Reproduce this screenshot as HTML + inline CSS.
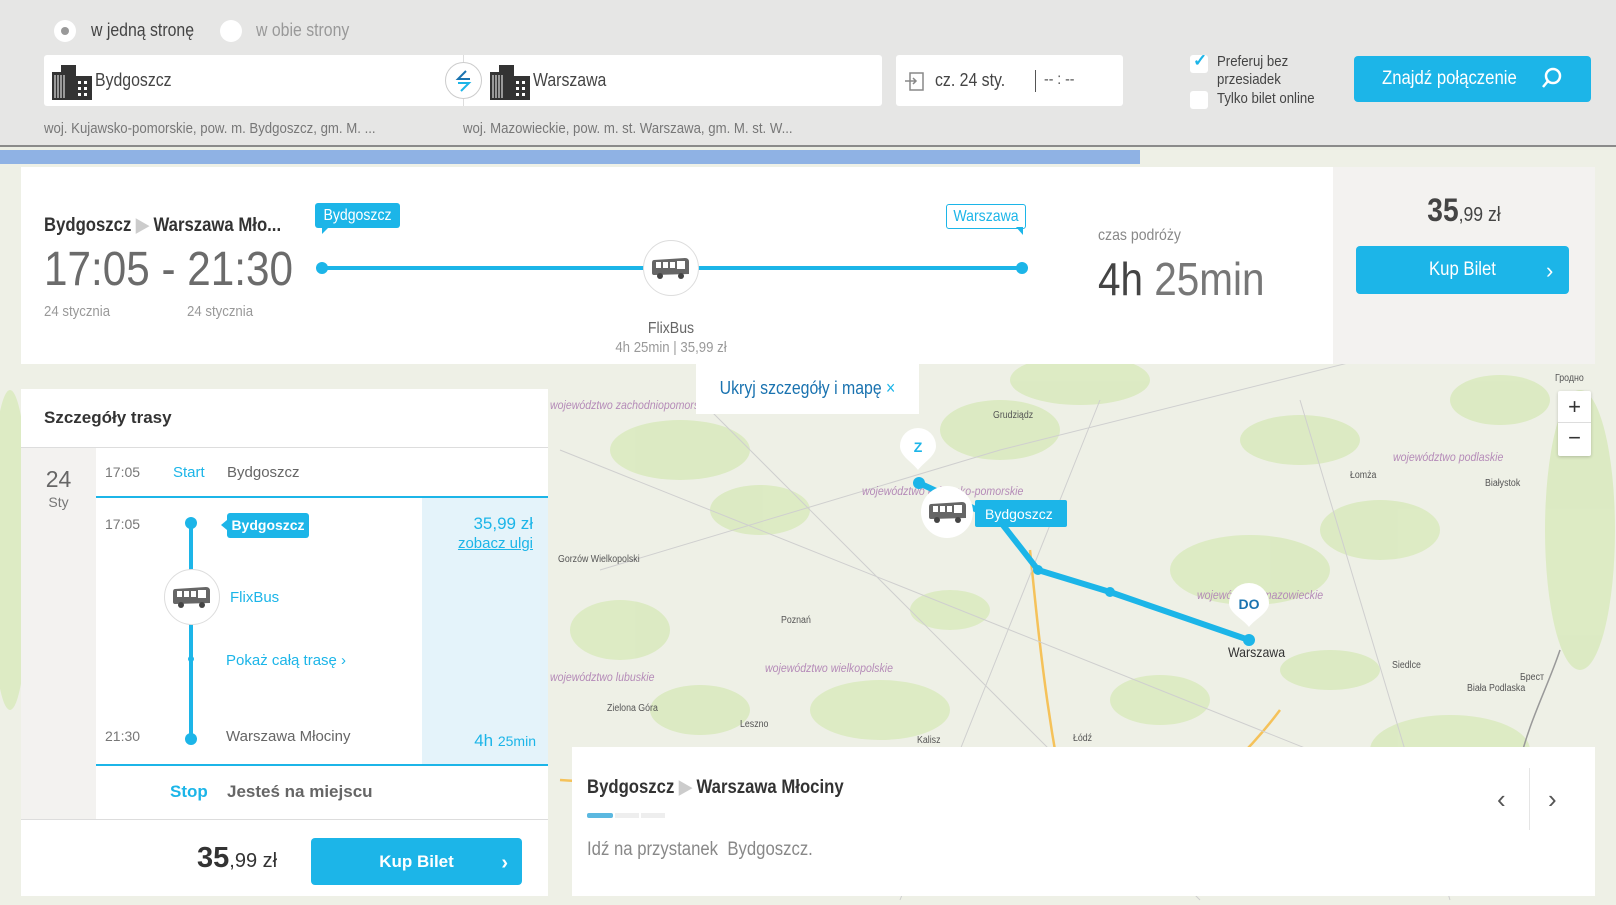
<!DOCTYPE html>
<html><head><meta charset="utf-8">
<style>
*{margin:0;padding:0;box-sizing:border-box}
body{width:1616px;height:905px;overflow:hidden;position:relative;font-family:"Liberation Sans",sans-serif;background:#eceee4;color:#444}
.a{position:absolute}
.n{transform:scaleX(.88);transform-origin:0 0;white-space:nowrap}
.nc{transform:scaleX(.88);transform-origin:50% 0;white-space:nowrap}
.map-lbl{position:absolute;font-size:12px;font-style:italic;color:#b58bb8;transform:scaleX(.88);transform-origin:0 0;white-space:nowrap}
.city{position:absolute;font-size:10px;color:#555;transform:scaleX(.88);transform-origin:0 0;white-space:nowrap}
.btn{position:absolute;background:#1cb5e8;color:#fff;border-radius:4px;font-size:18px}
</style></head><body>

<!-- map background -->
<svg class="a" style="left:0;top:150px" width="1616" height="755">
<rect width="1616" height="755" fill="#eef0e6"/>
<rect x="0" y="0" width="1140" height="14" fill="#8fb2e4"/>
<g fill="#d9eabd" opacity="0.85">
<ellipse cx="680" cy="300" rx="70" ry="30"/><ellipse cx="760" cy="360" rx="50" ry="25"/><ellipse cx="1000" cy="280" rx="60" ry="30"/>
<ellipse cx="1080" cy="230" rx="70" ry="25"/><ellipse cx="1250" cy="420" rx="80" ry="35"/><ellipse cx="1380" cy="380" rx="60" ry="30"/>
<ellipse cx="1580" cy="380" rx="35" ry="140"/><ellipse cx="880" cy="560" rx="70" ry="30"/><ellipse cx="1450" cy="600" rx="80" ry="35"/>
<ellipse cx="620" cy="480" rx="50" ry="30"/><ellipse cx="1160" cy="550" rx="50" ry="25"/><ellipse cx="10" cy="400" rx="20" ry="160"/>
<ellipse cx="1300" cy="290" rx="60" ry="25"/><ellipse cx="950" cy="460" rx="40" ry="20"/><ellipse cx="1500" cy="250" rx="50" ry="25"/>
<ellipse cx="700" cy="560" rx="50" ry="25"/><ellipse cx="1050" cy="640" rx="50" ry="20"/><ellipse cx="1330" cy="520" rx="50" ry="20"/>
</g>
<g fill="none" stroke="#f5c25a" stroke-width="2.5">
<path d="M560 630 C700 640 780 620 840 680 C900 730 1000 750 1100 700 C1160 670 1220 640 1280 560"/>
<path d="M1030 400 C1040 500 1050 600 1080 720"/>
<path d="M1300 700 C1320 690 1340 700 1360 710"/>
</g>
<g fill="none" stroke="#cfcfcf" stroke-width="1">
<path d="M560 300 L1560 700 M700 250 L1200 750 M1100 250 L900 750 M1300 250 L1450 750 M600 420 L1000 300 L1400 200"/>
</g>
<path d="M1560 500 C1540 560 1500 620 1520 700" stroke="#999" stroke-width="1.5" fill="none"/>
</svg>

<div class="map-lbl" style="left:550px;top:398px">województwo zachodniopomorskie</div>
<div class="map-lbl" style="left:862px;top:484px">województwo kujawsko-pomorskie</div>
<div class="map-lbl" style="left:1393px;top:450px">województwo podlaskie</div>
<div class="map-lbl" style="left:1197px;top:588px">województwo mazowieckie</div>
<div class="map-lbl" style="left:765px;top:661px">województwo wielkopolskie</div>
<div class="map-lbl" style="left:550px;top:670px">województwo lubuskie</div>
<div class="city" style="left:993px;top:410px">Grudziądz</div>
<div class="city" style="left:1350px;top:470px">Łomża</div>
<div class="city" style="left:1485px;top:478px">Białystok</div>
<div class="city" style="left:558px;top:554px">Gorzów Wielkopolski</div>
<div class="city" style="left:781px;top:615px">Poznań</div>
<div class="city" style="left:1392px;top:660px">Siedlce</div>
<div class="city" style="left:1467px;top:683px">Biała Podlaska</div>
<div class="city" style="left:1520px;top:672px">Брест</div>
<div class="city" style="left:607px;top:703px">Zielona Góra</div>
<div class="city" style="left:740px;top:719px">Leszno</div>
<div class="city" style="left:917px;top:735px">Kalisz</div>
<div class="city" style="left:1073px;top:733px">Łódź</div>
<div class="city" style="left:1555px;top:373px">Гродно</div>
<div class="a n" style="left:1228px;top:644px;font-size:14px;color:#333">Warszawa</div>

<!-- route -->
<svg class="a" style="left:0;top:0" width="1616" height="905">
<polyline points="919,483 999,520 1038,570 1110,592 1249,640" fill="none" stroke="#1cb5e8" stroke-width="6" stroke-linejoin="round"/>
<circle cx="919" cy="483" r="6" fill="#1cb5e8"/><circle cx="1038" cy="570" r="5" fill="#1cb5e8"/><circle cx="1110" cy="592" r="5" fill="#1cb5e8"/><circle cx="1249" cy="640" r="6" fill="#1cb5e8"/>
<path d="M918 470 C912 462 900 456 900 446 a18 18 0 0 1 36 0 C936 456 924 462 918 470Z" fill="#fff"/>
<text x="918" y="452" font-size="14" font-weight="bold" fill="#1cb5e8" text-anchor="middle" font-family="Liberation Sans">Z</text>
<path d="M1249 627 C1243 619 1229 613 1229 603 a20 20 0 0 1 40 0 C1269 613 1255 619 1249 627Z" fill="#fff"/>
<text x="1249" y="609" font-size="14" font-weight="bold" fill="#1a73b0" text-anchor="middle" font-family="Liberation Sans">DO</text>
<rect x="975" y="500" width="92" height="27" rx="2" fill="#1cb5e8"/>
<text x="985" y="519" font-size="14" fill="#fff" font-family="Liberation Sans">Bydgoszcz</text>
<circle cx="947" cy="512" r="26" fill="#fff"/>
</svg>
<svg class="a" style="left:928px;top:500px" width="40" height="24" viewBox="0 0 40 24"><path d="M3 4 L34 2 Q38 2 38 6 L38 18 L3 19 Q1 19 1 17 L1 7 Q1 4 3 4Z" fill="#666"/><g fill="#fff"><rect x="5" y="6" width="5" height="6"/><rect x="12" y="6" width="5" height="6"/><rect x="19" y="6" width="5" height="6"/><rect x="26" y="5" width="8" height="8"/></g><circle cx="9" cy="20" r="3" fill="#444"/><circle cx="30" cy="20" r="3" fill="#444"/></svg>

<!-- zoom controls -->
<div class="a" style="left:1558px;top:391px;width:33px;height:65px;background:#fff;border-radius:2px;box-shadow:0 1px 3px rgba(0,0,0,.2)">
<div style="height:32px;text-align:center;font-size:22px;line-height:32px;color:#333;border-bottom:1px solid #ddd">+</div>
<div style="height:32px;text-align:center;font-size:22px;line-height:30px;color:#333">−</div></div>

<!-- header -->
<div class="a" style="left:0;top:0;width:1616px;height:147px;background:#e6e6e5;border-bottom:2px solid #8a8a8a"></div>
<div class="a" style="left:54px;top:20px;width:22px;height:22px;border-radius:50%;background:#fff"></div>
<div class="a" style="left:61px;top:27px;width:8px;height:8px;border-radius:50%;background:#999"></div>
<div class="a n" style="left:91px;top:20px;font-size:18px;color:#444">w jedną stronę</div>
<div class="a" style="left:220px;top:20px;width:22px;height:22px;border-radius:50%;background:#fff"></div>
<div class="a n" style="left:256px;top:20px;font-size:18px;color:#999">w obie strony</div>

<div class="a" style="left:44px;top:55px;width:838px;height:51px;background:#fff;border-radius:3px"></div>
<div class="a" style="left:463px;top:55px;width:1px;height:51px;background:#ddd"></div>
<svg class="a" style="left:52px;top:64px" width="40" height="36" viewBox="0 0 40 36"><rect x="0" y="8" width="14" height="28" fill="#333"/><rect x="9" y="1" width="15" height="35" fill="#333"/><rect x="20" y="12" width="20" height="24" fill="#333"/><g stroke="#fff" stroke-width="1"><path d="M3 11v23M6 11v23M9 11v23M12 11v23"/></g><g fill="#fff"><rect x="26" y="17" width="3" height="3"/><rect x="32" y="17" width="3" height="3"/><rect x="26" y="23" width="3" height="3"/><rect x="32" y="23" width="3" height="3"/><rect x="26" y="29" width="3" height="3"/><rect x="32" y="29" width="3" height="3"/></g></svg>
<div class="a n" style="left:95px;top:70px;font-size:18px;color:#444">Bydgoszcz</div>
<div class="a" style="left:445px;top:62px;width:37px;height:37px;border-radius:50%;background:#fff;border:1px solid #ccc"></div>
<svg class="a" style="left:453px;top:68px" width="20" height="26"><path d="M13 3 L5 11 L17 11" fill="none" stroke="#1a73b0" stroke-width="2"/><path d="M5 15 L16 15 L8 23" fill="none" stroke="#1cb5e8" stroke-width="2"/></svg>
<svg class="a" style="left:490px;top:64px" width="40" height="36" viewBox="0 0 40 36"><rect x="0" y="8" width="14" height="28" fill="#333"/><rect x="9" y="1" width="15" height="35" fill="#333"/><rect x="20" y="12" width="20" height="24" fill="#333"/><g stroke="#fff" stroke-width="1"><path d="M3 11v23M6 11v23M9 11v23M12 11v23"/></g><g fill="#fff"><rect x="26" y="17" width="3" height="3"/><rect x="32" y="17" width="3" height="3"/><rect x="26" y="23" width="3" height="3"/><rect x="32" y="23" width="3" height="3"/><rect x="26" y="29" width="3" height="3"/><rect x="32" y="29" width="3" height="3"/></g></svg>
<div class="a n" style="left:533px;top:70px;font-size:18px;color:#444">Warszawa</div>

<div class="a" style="left:896px;top:55px;width:227px;height:51px;background:#fff;border-radius:3px"></div>
<svg class="a" style="left:904px;top:70px" width="22" height="22"><rect x="6" y="3" width="13" height="17" fill="none" stroke="#888" stroke-width="1.5"/><path d="M1 11 H12 M9 8 L12 11 L9 14" fill="none" stroke="#888" stroke-width="1.5"/></svg>
<div class="a n" style="left:935px;top:70px;font-size:18px;color:#444">cz. 24 sty.</div>
<div class="a" style="left:1035px;top:70px;width:1px;height:22px;background:#555"></div>
<div class="a n" style="left:1044px;top:71px;font-size:16px;color:#555">-- : --</div>

<div class="a" style="left:1190px;top:55px;width:18px;height:18px;background:#fff;border-radius:3px"></div>
<div class="a" style="left:1193px;top:51px;font-size:17px;color:#1cb5e8;font-weight:bold">✓</div>
<div class="a n" style="left:1217px;top:53px;font-size:15px;color:#444;line-height:18px">Preferuj bez<br>przesiadek</div>
<div class="a" style="left:1190px;top:91px;width:18px;height:18px;background:#fff;border-radius:3px"></div>
<div class="a n" style="left:1217px;top:90px;font-size:15px;color:#444">Tylko bilet online</div>
<div class="btn" style="left:1354px;top:56px;width:237px;height:46px"></div>
<div class="a n" style="left:1382px;top:68px;font-size:19px;color:#fff">Znajdź połączenie</div>
<svg class="a" style="left:1540px;top:66px" width="24" height="26"><circle cx="13" cy="10" r="7" fill="none" stroke="#fff" stroke-width="2.5"/><path d="M8 15 L3 21" stroke="#fff" stroke-width="2.5"/></svg>
<div class="a n" style="left:44px;top:120px;font-size:15px;color:#777">woj. Kujawsko-pomorskie, pow. m. Bydgoszcz, gm. M. ...</div>
<div class="a n" style="left:463px;top:120px;font-size:15px;color:#777">woj. Mazowieckie, pow. m. st. Warszawa, gm. M. st. W...</div>

<!-- top card -->
<div class="a" style="left:21px;top:167px;width:1312px;height:197px;background:#fff"></div>
<div class="a" style="left:1333px;top:167px;width:262px;height:197px;background:#f3f2f0"></div>
<div class="a n" style="left:44px;top:214px;font-size:19px;font-weight:bold;color:#333">Bydgoszcz <span style="color:#ccc">▶</span> Warszawa Mło...</div>
<div class="a n" style="left:44px;top:242px;font-size:48px;color:#6b6b6b">17:05 - 21:30</div>
<div class="a n" style="left:44px;top:303px;font-size:15px;color:#999">24 stycznia</div>
<div class="a n" style="left:187px;top:303px;font-size:15px;color:#999">24 stycznia</div>
<div class="a" style="left:322px;top:266px;width:700px;height:4px;background:#1cb5e8"></div>
<div class="a" style="left:316px;top:262px;width:12px;height:12px;border-radius:50%;background:#1cb5e8"></div>
<div class="a" style="left:1016px;top:262px;width:12px;height:12px;border-radius:50%;background:#1cb5e8"></div>
<div class="a" style="left:315px;top:203px;width:85px;height:25px;background:#1cb5e8;border-radius:3px"></div>
<div class="a nc" style="left:315px;top:207px;width:85px;color:#fff;font-size:16px;text-align:center">Bydgoszcz</div>
<div class="a" style="left:322px;top:226px;width:0;height:0;border-left:8px solid #1cb5e8;border-bottom:8px solid transparent"></div>
<div class="a" style="left:946px;top:204px;width:80px;height:25px;background:#fff;border:1px solid #1cb5e8;border-radius:3px"></div>
<div class="a nc" style="left:946px;top:208px;width:80px;color:#1cb5e8;font-size:16px;text-align:center">Warszawa</div>
<div class="a" style="left:1016px;top:227px;width:0;height:0;border-right:7px solid #1cb5e8;border-bottom:8px solid transparent"></div>
<div class="a" style="left:643px;top:240px;width:56px;height:56px;border-radius:50%;background:#fff;border:1px solid #ddd"></div>
<svg class="a" style="left:651px;top:256px" width="40" height="24" viewBox="0 0 40 24"><path d="M3 4 L34 2 Q38 2 38 6 L38 18 L3 19 Q1 19 1 17 L1 7 Q1 4 3 4Z" fill="#666"/><g fill="#fff"><rect x="5" y="6" width="5" height="6"/><rect x="12" y="6" width="5" height="6"/><rect x="19" y="6" width="5" height="6"/><rect x="26" y="5" width="8" height="8"/></g><circle cx="9" cy="20" r="3" fill="#444"/><circle cx="30" cy="20" r="3" fill="#444"/></svg>
<div class="a nc" style="left:571px;top:320px;width:200px;text-align:center;font-size:16px;color:#666">FlixBus</div>
<div class="a nc" style="left:571px;top:339px;width:200px;text-align:center;font-size:15px;color:#999">4h 25min | 35,99 zł</div>
<div class="a n" style="left:1098px;top:227px;font-size:16px;color:#888">czas podróży</div>
<div class="a n" style="left:1098px;top:252px;font-size:46px;color:#444">4h <span style="color:#777">25min</span></div>
<div class="a nc" style="left:1333px;top:192px;width:262px;text-align:center;font-size:20px;color:#444"><b style="font-size:32px">35</b>,99 zł</div>
<div class="btn" style="left:1356px;top:246px;width:213px;height:48px"></div>
<div class="a nc" style="left:1356px;top:259px;width:213px;text-align:center;font-size:19px;color:#fff">Kup Bilet</div>
<div class="a" style="left:1546px;top:258px;font-size:22px;color:#fff">›</div>

<!-- hide button -->
<div class="a" style="left:696px;top:364px;width:223px;height:50px;background:#fff"></div>
<div class="a nc" style="left:696px;top:378px;width:223px;color:#1a73b0;font-size:18px;text-align:center">Ukryj szczegóły i mapę <span style="color:#1cb5e8">×</span></div>

<!-- details card -->
<div class="a" style="left:21px;top:389px;width:527px;height:507px;background:#fff"></div>
<div class="a" style="left:44px;top:408px;font-size:17px;font-weight:bold;color:#333">Szczegóły trasy</div>
<div class="a" style="left:21px;top:447px;width:527px;height:1px;background:#ddd"></div>
<div class="a" style="left:21px;top:448px;width:75px;height:371px;background:#f3f2f0"></div>
<div class="a" style="left:21px;top:466px;width:75px;text-align:center;font-size:23px;color:#666">24</div>
<div class="a" style="left:21px;top:494px;width:75px;text-align:center;font-size:14px;color:#777">Sty</div>
<div class="a" style="left:105px;top:464px;font-size:14px;color:#777">17:05</div>
<div class="a" style="left:173px;top:464px;font-size:15px;color:#1cb5e8">Start</div>
<div class="a" style="left:227px;top:464px;font-size:15px;color:#666">Bydgoszcz</div>
<div class="a" style="left:96px;top:496px;width:452px;height:2px;background:#1cb5e8"></div>
<div class="a" style="left:422px;top:498px;width:126px;height:266px;background:#e4f3fa"></div>
<div class="a" style="left:96px;top:764px;width:452px;height:2px;background:#1cb5e8"></div>
<div class="a" style="left:105px;top:516px;font-size:14px;color:#777">17:05</div>
<div class="a" style="left:105px;top:728px;font-size:14px;color:#777">21:30</div>
<div class="a" style="left:189px;top:523px;width:4px;height:216px;background:#1cb5e8"></div>
<div class="a" style="left:185px;top:517px;width:12px;height:12px;border-radius:50%;background:#1cb5e8"></div>
<div class="a" style="left:185px;top:733px;width:12px;height:12px;border-radius:50%;background:#1cb5e8"></div>
<div class="a" style="left:188px;top:656px;width:6px;height:6px;border-radius:50%;background:#1cb5e8"></div>
<div class="a" style="left:164px;top:569px;width:56px;height:56px;border-radius:50%;background:#fff;border:1px solid #ddd"></div>
<svg class="a" style="left:171px;top:585px" width="42" height="24" viewBox="0 0 40 24"><path d="M3 4 L34 2 Q38 2 38 6 L38 18 L3 19 Q1 19 1 17 L1 7 Q1 4 3 4Z" fill="#666"/><g fill="#fff"><rect x="5" y="6" width="5" height="6"/><rect x="12" y="6" width="5" height="6"/><rect x="19" y="6" width="5" height="6"/><rect x="26" y="5" width="8" height="8"/></g><circle cx="9" cy="20" r="3" fill="#444"/><circle cx="30" cy="20" r="3" fill="#444"/></svg>
<div class="a" style="left:227px;top:513px;width:82px;height:25px;background:#1cb5e8;border-radius:3px;color:#fff;font-size:14px;font-weight:bold;line-height:25px;text-align:center">Bydgoszcz</div>
<div class="a" style="left:221px;top:520px;width:0;height:0;border-right:6px solid #1cb5e8;border-top:5px solid transparent;border-bottom:5px solid transparent"></div>
<div class="a" style="left:230px;top:589px;font-size:15px;color:#1cb5e8">FlixBus</div>
<div class="a" style="left:226px;top:652px;font-size:15px;color:#1cb5e8">Pokaż całą trasę ›</div>
<div class="a" style="left:226px;top:728px;font-size:15px;color:#666">Warszawa Młociny</div>
<div class="a" style="left:422px;top:514px;width:111px;text-align:right;font-size:17px;color:#1cb5e8">35,99 zł</div>
<div class="a" style="left:422px;top:535px;width:111px;text-align:right;font-size:15px;color:#1cb5e8;text-decoration:underline">zobacz ulgi</div>
<div class="a" style="left:422px;top:731px;width:114px;text-align:right;font-size:17px;color:#1cb5e8">4h <span style="font-size:14px">25min</span></div>
<div class="a" style="left:170px;top:782px;font-size:17px;font-weight:bold;color:#1cb5e8">Stop</div>
<div class="a" style="left:227px;top:782px;font-size:17px;font-weight:bold;color:#666">Jesteś na miejscu</div>
<div class="a" style="left:21px;top:819px;width:527px;height:1px;background:#ddd"></div>
<div class="a" style="left:197px;top:842px;font-size:20px;color:#333"><b style="font-size:29px">35</b>,99 zł</div>
<div class="btn" style="left:311px;top:838px;width:211px;height:47px;line-height:47px;text-align:center;font-size:17px;font-weight:bold">Kup Bilet<span style="position:absolute;right:14px;top:2px;font-size:20px">›</span></div>

<!-- bottom right card -->
<div class="a" style="left:572px;top:747px;width:1023px;height:149px;background:#fff"></div>
<div class="a n" style="left:587px;top:776px;font-size:19px;font-weight:bold;color:#333">Bydgoszcz <span style="color:#ccc">▶</span> Warszawa Młociny</div>
<div class="a" style="left:587px;top:813px;width:26px;height:5px;background:#5bb8e0;border-radius:2px"></div>
<div class="a" style="left:615px;top:813px;width:24px;height:5px;background:#eee"></div>
<div class="a" style="left:641px;top:813px;width:24px;height:5px;background:#eee"></div>
<div class="a n" style="left:587px;top:839px;font-size:19px;color:#888">Idź na przystanek&nbsp; Bydgoszcz.</div>
<div class="a" style="left:1529px;top:768px;width:1px;height:62px;background:#e5e5e5"></div>
<div class="a" style="left:1497px;top:784px;font-size:26px;color:#555">‹</div>
<div class="a" style="left:1548px;top:784px;font-size:26px;color:#555">›</div>
</body></html>
